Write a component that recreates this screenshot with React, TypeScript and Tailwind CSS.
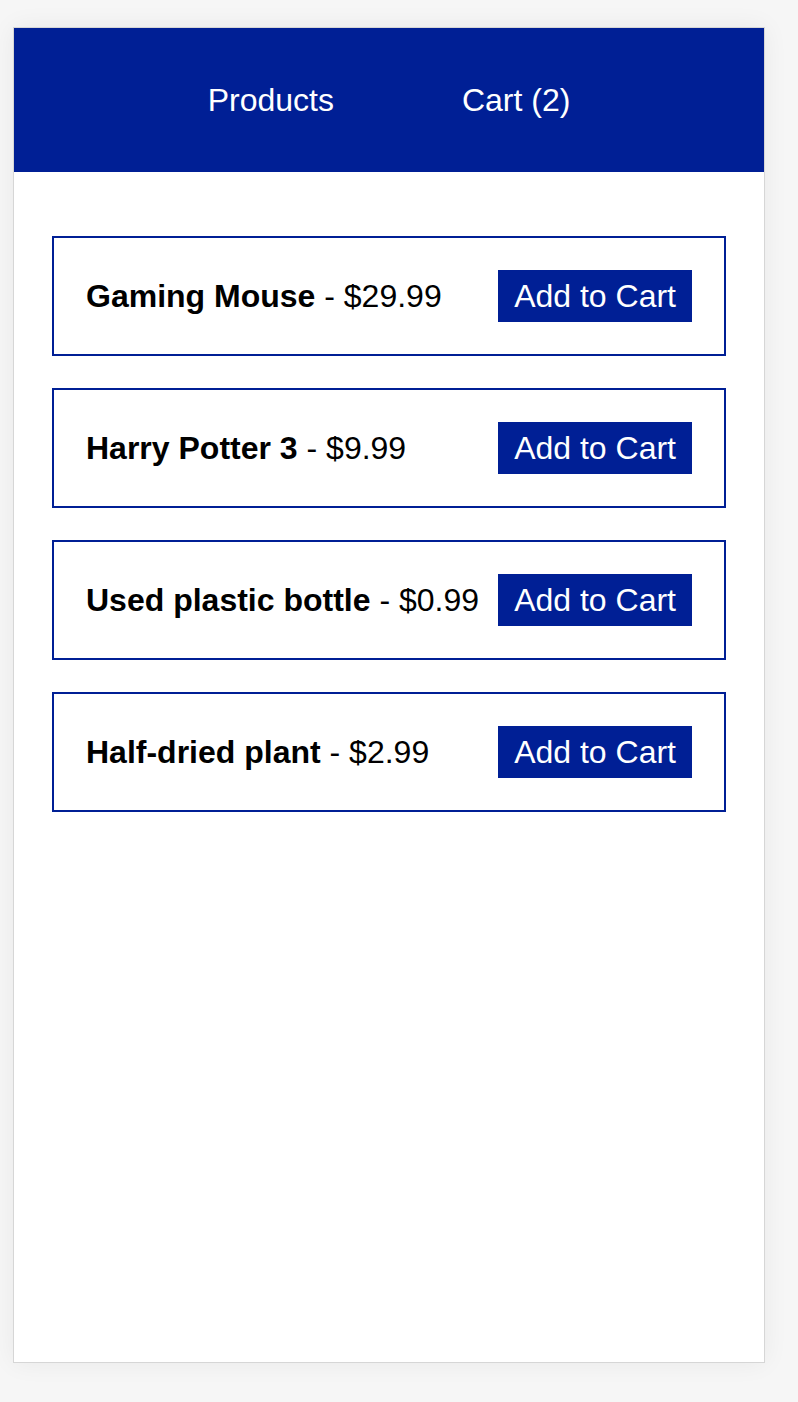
const products = [
  { name: 'Gaming Mouse', price: '$29.99' },
  { name: 'Harry Potter 3', price: '$9.99' },
  { name: 'Used plastic bottle', price: '$0.99' },
  { name: 'Half-dried plant', price: '$2.99' },
];

export default function App() {
  return (
    <div
      className="min-h-[1402px] bg-[#f6f6f6] pt-[27px] pl-[13px]"
      style={{ fontFamily: "'Liberation Sans', Arial, Helvetica, sans-serif" }}
    >
      <div className="w-[752px] h-[1336px] bg-white border border-[#d6d6d6] shadow-[0_0_24px_rgba(0,0,0,0.06)]">
        {/* Nav */}
        <nav className="h-[144px] bg-[#001f95] flex items-center justify-center gap-[128px] text-white text-[32px]">
          <a className="cursor-pointer">Products</a>
          <a className="cursor-pointer">Cart (2)</a>
        </nav>

        {/* Product list */}
        <div className="pt-[64px] px-[38px] flex flex-col gap-[32px]">
          {products.map((p) => (
            <div
              key={p.name}
              className="h-[120px] border-2 border-[#001f95] px-[32px] flex items-center justify-between text-[32px] text-black"
            >
              <span className="leading-[36px]">
                <b className="font-bold">{p.name}</b> - {p.price}
              </span>
              <button className="bg-[#001f95] text-white text-[32px] px-4 py-2 leading-[36px]">
                Add to Cart
              </button>
            </div>
          ))}
        </div>
      </div>
    </div>
  );
}
